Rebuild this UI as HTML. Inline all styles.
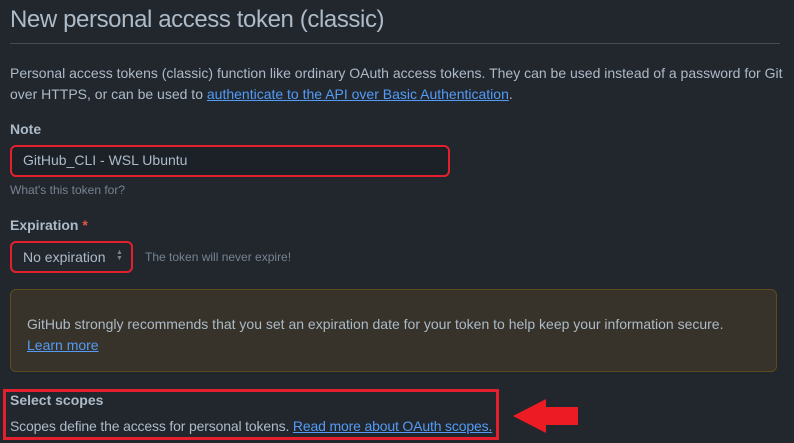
<!DOCTYPE html>
<html><head><style>
body{margin:0;width:794px;height:443px;background:#22272e;font-family:"Liberation Sans",sans-serif;color:#adbac7;position:relative;overflow:hidden;font-size:14px}
.a{position:absolute;white-space:nowrap}
a{color:#539bf5;text-decoration:underline}
</style></head><body>
<div class="a" style="left:10px;top:6px;font-size:24px;letter-spacing:-0.4px;color:#adbac7">New personal access token (classic)</div>
<div class="a" style="left:10px;top:43px;width:770px;height:1px;background:#444c56"></div>
<div class="a" style="left:10px;top:63px;line-height:21px">Personal access tokens (classic) function like ordinary OAuth access tokens. They can be used instead of a password for Git<br>over HTTPS, or can be used to <a>authenticate to the API over Basic Authentication</a>.</div>
<div class="a" style="left:10px;top:121px;font-weight:bold">Note</div>
<div class="a" style="left:10px;top:145px;width:436px;height:28px;border:2px solid #e5202e;border-radius:6px;background:#1c2128"></div>
<div class="a" style="left:23px;top:152px">GitHub_CLI - WSL Ubuntu</div>
<div class="a" style="left:10px;top:183px;font-size:12px;color:#768390">What's this token for?</div>
<div class="a" style="left:10px;top:217px;font-weight:bold">Expiration <span style="color:#e5534b">*</span></div>
<div class="a" style="left:10px;top:241px;width:119px;height:28px;border:2px solid #e5202e;border-radius:6px;background:#22272e"></div>
<div class="a" style="left:23px;top:249px">No expiration</div>
<div class="a" style="left:116px;top:250px;font-size:7px;color:#768390;line-height:6px">▲<br>▼</div>
<div class="a" style="left:145px;top:250px;font-size:12px;color:#768390">The token will never expire!</div>
<div class="a" style="left:10px;top:289px;width:765px;height:81px;border:1px solid #5e4b1c;border-radius:6px;background:#37332a"></div>
<div class="a" style="left:27px;top:314px;line-height:21px">GitHub strongly recommends that you set an expiration date for your token to help keep your information secure.<br><a>Learn more</a></div>
<div class="a" style="left:3px;top:389px;width:490px;height:45px;border:3px solid #e5202e"></div>
<div class="a" style="left:10px;top:392px;font-weight:bold">Select scopes</div>
<div class="a" style="left:10px;top:418px;letter-spacing:-0.16px">Scopes define the access for personal tokens. <a>Read more about OAuth scopes.</a></div>
<svg class="a" style="left:510px;top:397px" width="72" height="40"><polygon points="3,19 36,2 36,10 68,10 68,28 36,28 36,36" fill="#ed1c24"/></svg>
</body></html>
